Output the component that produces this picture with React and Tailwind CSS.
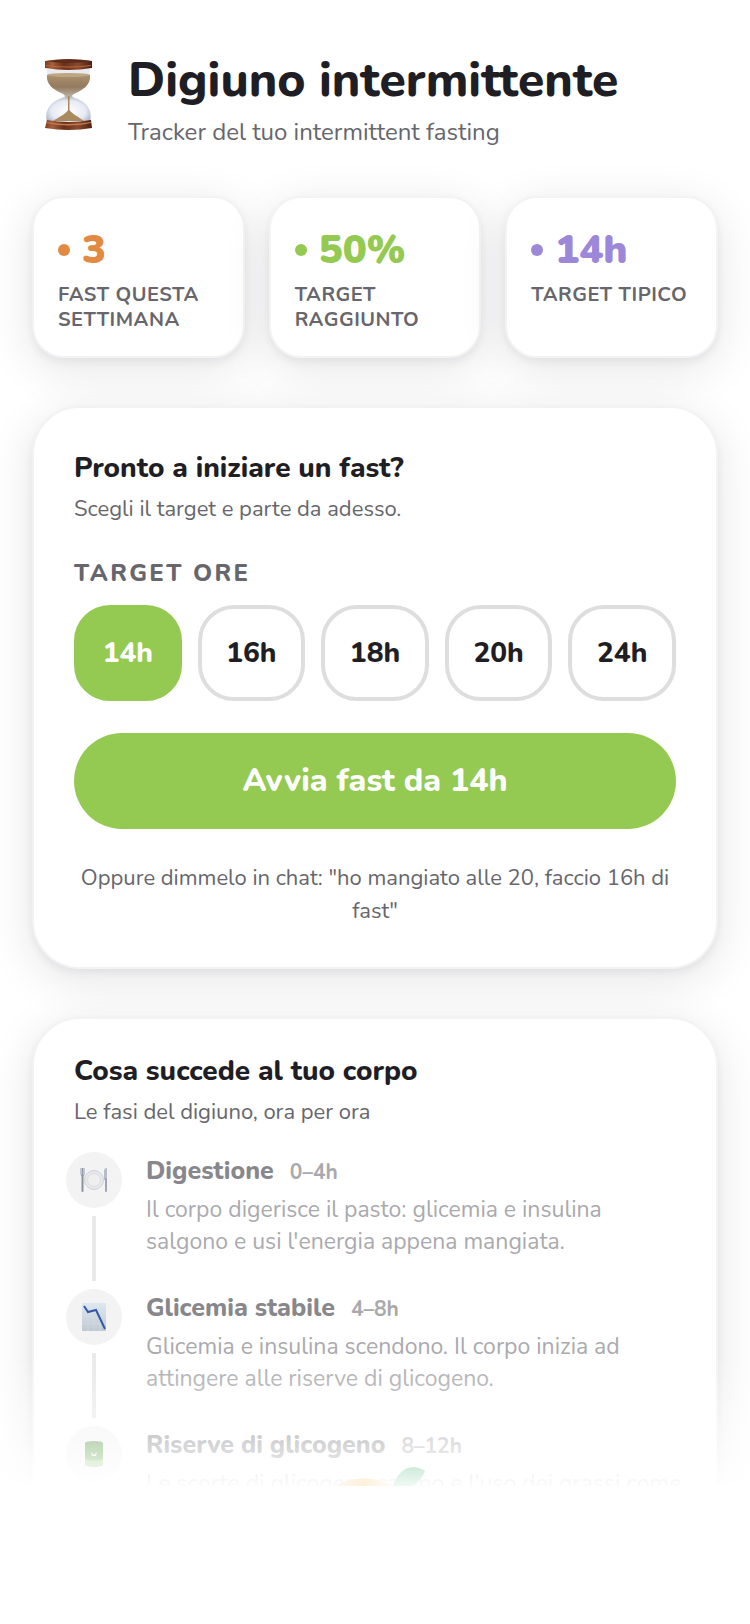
import React, { useState } from 'react'

const stats = [
  { value: '3', label: 'Fast questa settimana', text: 'text-[#e28a41]', dot: 'bg-[#e28a41]' },
  { value: '50%', label: 'Target raggiunto', text: 'text-[#94c952]', dot: 'bg-[#94c952]' },
  { value: '14h', label: 'Target tipico', text: 'text-[#9c87d9]', dot: 'bg-[#9c87d9]' },
]

const targets = [14, 16, 18, 20, 24]

function Hourglass() {
  return (
    <svg viewBox="2 0 80 90" className="w-20 h-[90px]" aria-hidden="true">
      <defs>
        <linearGradient id="wood" x1="0" x2="1">
          <stop offset="0" stopColor="#7a3c22" />
          <stop offset="0.15" stopColor="#a4603a" />
          <stop offset="0.4" stopColor="#6a2e19" />
          <stop offset="0.7" stopColor="#8a4a2e" />
          <stop offset="1" stopColor="#4c1f11" />
        </linearGradient>
        <linearGradient id="sand" x1="0" x2="0" y1="0" y2="1">
          <stop offset="0" stopColor="#b09470" />
          <stop offset="0.5" stopColor="#937a5e" />
          <stop offset="1" stopColor="#cdc4ba" />
        </linearGradient>
        <radialGradient id="glass" cx="0.5" cy="0.6" r="0.6">
          <stop offset="0" stopColor="#ffffff" />
          <stop offset="0.65" stopColor="#e6eaf3" />
          <stop offset="1" stopColor="#a3acc4" />
        </radialGradient>
      </defs>
      <path d="M17 19H60V27C60 36 51 40 44 44H33C26 40 17 36 17 27Z" fill="#e9ebf0" />
      <path d="M36 45H41C42 48 48 48 53 52C60 57 62 64 60 72H17C15 64 17 57 24 52C29 48 35 48 36 45Z" fill="url(#glass)" />
      <path d="M17 25Q39 22 60 25C61 34 54 39 48 42C43 44 41 46 40 50H37C36 46 34 44 29 42C23 39 16 34 17 25Z" fill="url(#sand)" />
      <ellipse cx="38.500" cy="25" rx="21" ry="2" fill="#bda684" />
      <path d="M38 46H39.500V60C42 64 49 67 54 71H23C29 67 36 64 38 60Z" fill="#a98a5e" />
      <path d="M15 11Q39 7 62 11V18Q39 22 15 18Z" fill="url(#wood)" />
      <path d="M16 11Q39 8 61 11Q39 15 16 11Z" fill="#5d2b1a" />
      <path d="M16 15Q39 18 61 15V16Q39 19 16 16Z" fill="#b8683f" />
      <path d="M17 70Q39 74 61 70L62 78Q39 82 15 78Z" fill="url(#wood)" />
      <path d="M16 72Q39 76 61 72V73Q39 78 16 73Z" fill="#c07a50" />
    </svg>
  )
}

function PlateIcon() {
  return (
    <svg viewBox="0 0 28 26" className="w-7 h-[26px]" aria-hidden="true">
      <circle cx="14" cy="13" r="9.500" fill="#e6e8ec" stroke="#cfd2d8" />
      <circle cx="14" cy="13" r="6.500" fill="#efefef" stroke="#dcdce0" />
      <path d="M1 1V7Q1 9 2.500 9Q4 9 4 7V1M2.500 1V9" fill="none" stroke="#8f98ab" />
      <path d="M2.500 9V24" stroke="#8a92a2" strokeWidth="2" strokeLinecap="round" />
      <path d="M24 13V4Q24 1 27 1V13Z" fill="#b6bdc9" />
      <path d="M26 12V24" stroke="#a0a4b4" strokeWidth="2" strokeLinecap="round" />
    </svg>
  )
}

function ChartIcon() {
  return (
    <svg viewBox="0 0 24 28" className="w-6 h-7" aria-hidden="true">
      <defs>
        <linearGradient id="sheet" x1="0" x2="0" y1="0" y2="1">
          <stop offset="0" stopColor="#dfe9f0" />
          <stop offset="1" stopColor="#c0c9d2" />
        </linearGradient>
      </defs>
      <path d="M0 0H24V28H0Z" fill="url(#sheet)" />
      <path d="M6 0V28M12 0V28M18 0V28M0 7H24M0 14H24M0 21H24" stroke="#d2dde5" strokeWidth="0.500" />
      <path d="M2 3L6 9L14 7L23 26" fill="none" stroke="#3558a6" strokeWidth="2" />
    </svg>
  )
}

function BatteryIcon() {
  return (
    <svg viewBox="0 0 20 28" className="w-5 h-7" aria-hidden="true">
      <path d="M1 3Q10 0 19 3V25Q10 29 1 25Z" fill="#4f9c3c" />
      <path d="M1 19Q10 22 19 19V25Q10 29 1 25Z" fill="#86c46c" />
      <ellipse cx="10" cy="3" rx="9" ry="2" fill="#5c8f50" />
      <path d="M7 12L10 15L13 12L12 16H8Z" fill="#f2f5c8" />
    </svg>
  )
}

const phases = [
  {
    icon: PlateIcon,
    title: 'Digestione',
    hours: '0–4h',
    text: "Il corpo digerisce il pasto: glicemia e insulina salgono e usi l'energia appena mangiata.",
  },
  {
    icon: ChartIcon,
    title: 'Glicemia stabile',
    hours: '4–8h',
    text: 'Glicemia e insulina scendono. Il corpo inizia ad attingere alle riserve di glicogeno.',
  },
  {
    icon: BatteryIcon,
    title: 'Riserve di glicogeno',
    hours: '8–12h',
    text: "Le scorte di glicogeno calano e l'uso dei grassi come energia aumenta.",
  },
]

function Card({ className, children }) {
  return (
    <section
      className={`bg-white border-2 border-[#f3f3f4] shadow-[0_10px_48px_rgba(20,20,40,0.11),0_4px_8px_rgba(20,20,40,0.06)] ${className}`}
    >
      {children}
    </section>
  )
}

function Phase({ icon: Icon, title, hours, text }) {
  return (
    <li className="flex gap-6">
      <div className="flex flex-col items-center gap-2 pb-2">
        <div className="flex items-center justify-center size-14 rounded-full bg-[#f3f3f4]">
          <Icon />
        </div>
        <div className="w-1 flex-1 bg-[#e9e9ea]" />
      </div>
      <div className="flex-1 pb-[31px] pt-1">
        <h3 className="flex items-baseline gap-4 text-[25px] leading-[31px] font-extrabold text-[#87878c]">
          {title}
          <span className="text-[21px] leading-[31px] font-bold text-[#a9a9ad]">{hours}</span>
        </h3>
        <p className="mt-1.5 text-[23px] leading-8 text-[#aaaaae]">{text}</p>
      </div>
    </li>
  )
}

export default function App() {
  const [target, setTarget] = useState(14)

  return (
    <main className="relative h-screen overflow-hidden bg-white px-8 pt-[50px] font-[Nunito,Lato,sans-serif] text-[#1e1e24]">
      <header className="flex items-start gap-4">
        <Hourglass />
        <div>
          <h1 className="text-5xl leading-[60px] font-extrabold">Digiuno intermittente</h1>
          <p className="mt-1 text-2xl leading-9 text-[#66666c]">Tracker del tuo intermittent fasting</p>
        </div>
      </header>

      <div className="mt-[46px] grid grid-cols-3 gap-6">
        {stats.map((s) => (
          <Card key={s.label} className="rounded-[32px] px-6 py-6">
            <div className={`flex items-center gap-3 text-[40px] leading-[56px] font-black ${s.text}`}>
              <span className={`size-3 rounded-full ${s.dot}`} />
              {s.value}
            </div>
            <p className="mt-1 text-xl leading-[25px] font-bold uppercase tracking-wide text-[#66666c]">{s.label}</p>
          </Card>
        ))}
      </div>

      <Card className="mt-12 rounded-[48px] px-10 pt-10 pb-[39px]">
        <h2 className="text-[28px] leading-10 font-extrabold">Pronto a iniziare un fast?</h2>
        <p className="mt-[5px] text-[22px] leading-8 text-[#66666c]">Scegli il target e parte da adesso.</p>
        <fieldset className="mt-8">
          <legend className="text-2xl leading-8 font-extrabold tracking-widest text-[#66666c]">TARGET ORE</legend>
          <div className="mt-4 grid grid-cols-5 gap-4">
            {targets.map((h) => (
              <button
                key={h}
                type="button"
                aria-pressed={target === h}
                onClick={() => setTarget(h)}
                className={`h-24 rounded-[36px] border-4 text-[28px] font-extrabold ${
                  target === h ? 'border-[#94c952] bg-[#94c952] text-white' : 'border-[#dedede] bg-white'
                }`}
              >
                {h}h
              </button>
            ))}
          </div>
        </fieldset>
        <button type="button" className="mt-8 h-24 w-full rounded-full bg-[#94c952] text-[32px] font-extrabold text-white">
          Avvia fast da {target}h
        </button>
        <p className="mt-[33px] text-center text-[22px] leading-[33px] text-[#66666c]">
          Oppure dimmelo in chat: "ho mangiato alle 20, faccio 16h di fast"
        </p>
      </Card>

      <Card className="mt-12 rounded-[48px] px-10 py-8">
        <h2 className="text-[28px] leading-10 font-extrabold">Cosa succede al tuo corpo</h2>
        <p className="mt-[5px] text-[22px] leading-8 text-[#66666c]">Le fasi del digiuno, ora per ora</p>
        <ol className="mt-6 -mx-2">
          {phases.map((p) => (
            <Phase key={p.title} {...p} />
          ))}
        </ol>
      </Card>

      {/* bottom fade with the fruit logo peeking out */}
      <div className="pointer-events-none absolute inset-x-0 bottom-0">
        <div className="flex h-[130px] items-end justify-center bg-linear-to-b from-white/0 to-white/95">
          <svg viewBox="0 0 100 20" className="w-[100px] h-5" aria-hidden="true">
            <defs>
              <linearGradient id="peel" x1="0" x2="1">
                <stop offset="0" stopColor="#fff8f3" />
                <stop offset="0.5" stopColor="#fdf0dc" />
                <stop offset="1" stopColor="#fffcf6" />
              </linearGradient>
              <linearGradient id="leaf" x1="0" x2="0" y1="0" y2="1">
                <stop offset="0" stopColor="#cfeadb" />
                <stop offset="1" stopColor="#f0faf4" />
              </linearGradient>
            </defs>
            <path d="M10 20Q38 5 68 20Z" fill="url(#peel)" />
            <path d="M68 20Q74 2 88 1Q94 1 100 5Q96 16 86 20Z" fill="url(#leaf)" />
          </svg>
        </div>
        <div className="h-[138px] bg-white" />
      </div>
    </main>
  )
}
